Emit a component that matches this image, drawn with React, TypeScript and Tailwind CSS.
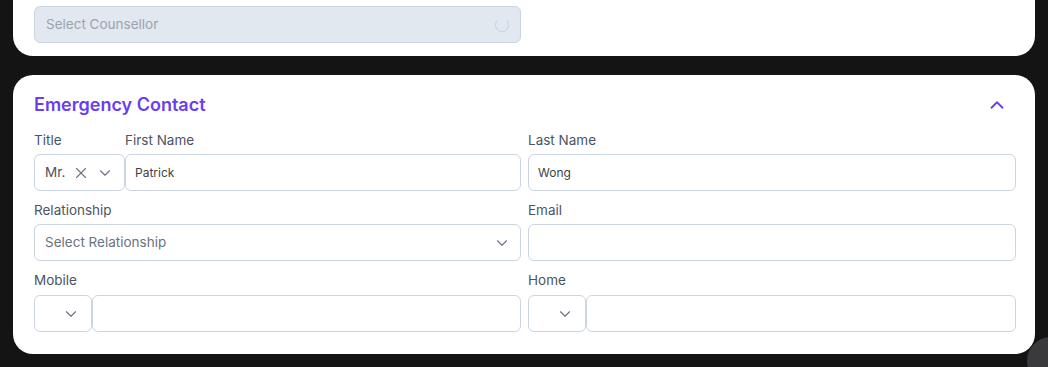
import { ChevronDown, ChevronUp, X } from "lucide-react";

const font = { fontFamily: "Inter, 'Open Sans', sans-serif" };

function Label({ children }: { children: React.ReactNode }) {
  return <div className="h-5 text-[13.5px] leading-5 text-[#4b5563]">{children}</div>;
}

function Field({ value, className = "" }: { value?: string; className?: string }) {
  return (
    <div
      className={`flex h-[37px] items-center rounded-[6px] border border-[#cbd5e1] bg-white px-[9px] text-[12px] text-[#3f3f46] ${className}`}
    >
      {value}
    </div>
  );
}

function CodeSelect() {
  return (
    <div className="flex h-[37px] w-[58px] shrink-0 items-center justify-end rounded-[6px] border border-[#cbd5e1] bg-white pr-[11px]">
      <ChevronDown className="h-[18px] w-[18px] text-[#6b7280]" strokeWidth={1.5} />
    </div>
  );
}

export default function App() {
  return (
    <div
      style={font}
      className="relative h-[367px] w-[1048px] overflow-hidden bg-[#141414] px-[13px]"
    >
      <div className="flex rounded-b-[20px] bg-white pb-[13px] pl-[21px] pr-[19px] pt-[6px]">
        <div className="flex h-[37px] w-[487px] items-center justify-between rounded-[6px] border border-[#cbd5e1] bg-[#e2e8f0] px-[11px] text-[13.5px] text-[#9ca3af]">
          <span>Select Counsellor</span>
          <span className="h-[14px] w-[14px] rounded-full border border-[#cbd2dc] border-t-transparent" />
        </div>
      </div>

      <div className="mt-[19px] rounded-[20px] bg-white pb-[22px] pl-[21px] pr-[19px] pt-[17px]">
        <div className="flex h-6 items-center justify-between">
          <h2 className="text-[18px] font-semibold text-[#6a3df2]">Emergency Contact</h2>
          <ChevronUp className="mr-[8px] mt-[2px] h-[22px] w-[22px] text-[#6a3df2]" strokeWidth={2} />
        </div>

        <div className="mt-[14px] grid grid-cols-[487px_1fr] gap-x-[7px]">
          <div className="flex">
            <div className="w-[91px] shrink-0">
              <Label>Title</Label>
              <div className="mt-1 flex h-[37px] items-center rounded-[6px] border border-[#cbd5e1] bg-white pl-[10px] pr-[10px] text-[13.5px] text-[#52525b]">
                <span className="flex-1">Mr.</span>
                <X className="mr-[6px] h-[18px] w-[18px] text-[#6b7280]" strokeWidth={1.5} />
                <ChevronDown className="h-[18px] w-[18px] text-[#6b7280]" strokeWidth={1.5} />
              </div>
            </div>
            <div className="flex-1">
              <Label>First Name</Label>
              <Field value="Patrick" className="mt-1" />
            </div>
          </div>
          <div>
            <Label>Last Name</Label>
            <Field value="Wong" className="mt-1" />
          </div>

          <div className="mt-[9px]">
            <Label>Relationship</Label>
            <div className="mt-1 flex h-[37px] items-center justify-between rounded-[6px] border border-[#cbd5e1] bg-white pl-[10px] pr-[9px] text-[13.5px] text-[#6b7280]">
              <span>Select Relationship</span>
              <ChevronDown className="h-[18px] w-[18px] text-[#6b7280]" strokeWidth={1.5} />
            </div>
          </div>
          <div className="mt-[9px]">
            <Label>Email</Label>
            <Field className="mt-1" />
          </div>

          <div className="mt-[9px]">
            <Label>Mobile</Label>
            <div className="mt-[5px] flex">
              <CodeSelect />
              <Field className="flex-1" />
            </div>
          </div>
          <div className="mt-[9px]">
            <Label>Home</Label>
            <div className="mt-[5px] flex">
              <CodeSelect />
              <Field className="flex-1" />
            </div>
          </div>
        </div>
      </div>

      <div className="absolute left-[1027px] top-[337px] h-12 w-12 rounded-full bg-[#3a3a3c]" />
    </div>
  );
}
